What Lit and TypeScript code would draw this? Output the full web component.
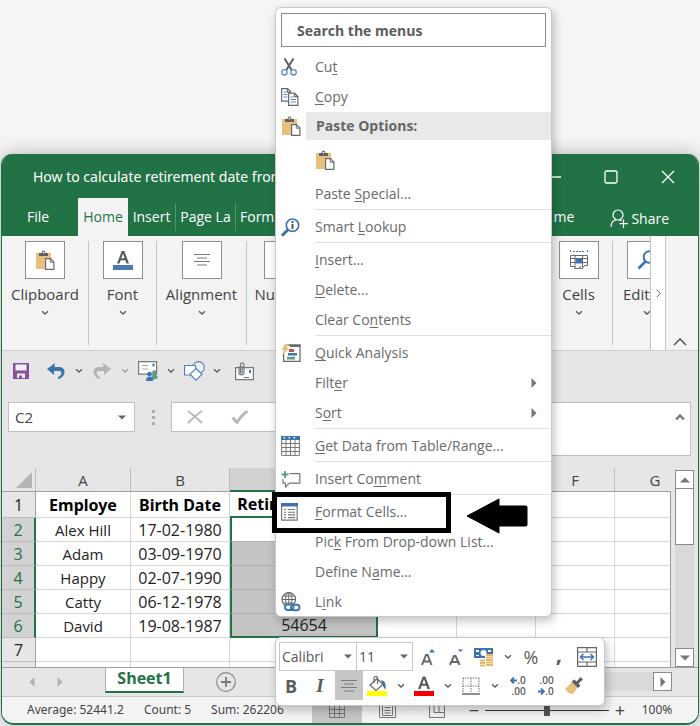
import { LitElement, html, svg, css, nothing, type TemplateResult } from "lit";
import { customElement } from "lit/decorators.js";
import { classMap } from "lit/directives/class-map.js";

const pic = (w: number, h: number, body: unknown) =>
  html`<svg width=${w} height=${h} viewBox="0 0 ${w} ${h}" fill="none" aria-hidden="true">${body}</svg>`;

const icons = {
  paste: () => pic(20, 20, svg`
    <path d="M1 3h15v5h-6v11H1z" fill="#e8c07d"/>
    <path d="M4 3h2.500c.2-1.600 1-2.500 2-2.500s1.800.9 2 2.500H13v3H4z" fill="#606060"/>
    <circle cx="8.500" cy="2.600" r=".9" fill="#fff"/>
    <path d="M10.600 8.600h4.900l3.400 3.400v7.400h-8.300z" fill="#fff" stroke="#6a6a6a" stroke-width="1.200"/>
    <path d="M15.300 8.600v3.600h3.500" stroke="#6a6a6a"/>`),
  fontA: () => pic(20, 20, svg`
    <path d="M4 13.500 8.800 1h2.500l4.700 12.500h-2.500l-1.200-3.300H7.600l-1.100 3.300zM8.300 8.300h3.300L10 3.500z" fill="#595959"/>
    <path d="M0 15h20v5H0z" fill="#4a7ab5"/>`),
  center: () => pic(18, 14, svg`<path d="M1 1.500h16M4 5h10M1 8.500h16M4 12h10" stroke="#7a7a7a" stroke-width="1.200"/>`),
  number: () => pic(20, 20, svg`<path d="M4 16 16 4" stroke="#666" stroke-width="1.500"/><circle cx="6" cy="6" r="2.500" stroke="#666"/><circle cx="14" cy="14" r="2.500" stroke="#666"/>`),
  cells: () => pic(20, 20, svg`
    <path d="M1.500 0v3M18.500 0v3M4 1.500h12" stroke="#3d74b0" stroke-dasharray="2 1"/>
    <path d="M1.500 5.500h17v10h-3l-2 3h-3l1-2-2 2h-4l1-2H1.500zM1.500 8.500h17M1.500 12.500h17M6 5.500v10M13.500 5.500v12" stroke="#6a6a6a"/>
    <path d="M6.500 8.500h7v5h-7z" fill="#3d74b0"/>`),
  find: () => pic(20, 20, svg`<circle cx="12.500" cy="7" r="5.800" stroke="#3d74b0" stroke-width="2"/><path d="M8.500 11.500 1.500 18.500" stroke="#3d74b0" stroke-width="2.600"/>`),
  chev: () => pic(8, 6, svg`<path d="M1 1.200 4 4l3-2.800" stroke="#5a5a5a" stroke-width="1.300"/>`),
  tri: () => pic(8, 5, svg`<path d="M0 .5h8L4 4.500z" fill="#666"/>`),
  save: () => pic(16, 16, svg`<path d="M0 0h16v16H0z" fill="#8352a0"/><path d="M2.500 1.500h11v6h-11z" fill="#f4eef7"/><path d="M4 10.500h8V15H4z" fill="#f4eef7"/><path d="M6 12.500h3V16H6z" fill="#8352a0"/>`),
  undo: () => pic(18, 16, svg`<path d="M8 0 0 6l7 6V8h5c3.500 0 3 4.500-1 6v2c8-1.500 9-12 1-12H7.500z" fill="#3d74b0"/>`),
  redo: () => pic(18, 16, svg`<path d="M10 0l8 6-7 6V8H6c-3.500 0-3 4.500 1 6v2C-1 14.500-2 4 6 4h4.500z" fill="#b4b4b4"/>`),
  mail: () => pic(20, 20, svg`
    <path d="M.6.600h18v12.500H.600z" fill="#fff" stroke="#777" stroke-width="1.200"/><path d="M4 4.500h6M4 8h6" stroke="#aaa"/><path d="M14.500 2.500h2v3h-2z" fill="#3d74b0"/>
    <circle cx="16.500" cy="11.500" r="2.300" fill="#5d9c84"/><path d="M13.500 19v-3c0-3 6-3 6 0v1.500z" fill="#5d9c84"/>
    <circle cx="11.500" cy="13" r="2.300" fill="#3d74b0"/><path d="M8 20c-.5-6 7.500-6 7 0z" fill="#3d74b0"/>`),
  shapes: () => pic(21, 20, svg`
    <circle cx="14.500" cy="6.500" r="5.800" fill="#e9f0f7" stroke="#5585b8" stroke-width="1.200"/>
    <path d="M.6 4.500h11v9.500H.600z" fill="#fff" stroke="#5585b8" stroke-width="1.200"/>
    <path d="m12 7.500 6 5.800-6 5.800-6-5.800z" fill="#fff" stroke="#5585b8" stroke-width="1.200"/>`),
  attach: () => pic(19, 19, svg`
    <path d="M.6 5.600h17.800v12H.600z" fill="#fff" stroke="#777" stroke-width="1.200"/><path d="M14 8h2v3h-2zM9 15h5v1H9z" fill="#3d74b0"/>
    <path d="M4 4.500v6.500c0 2.500 5 2.500 5 0V3c0-3-3.500-3-3.500 0v7.500c0 1 1.700 1 1.700 0V4" stroke="#777" stroke-width="1.200"/>`),
  cancel: () => pic(16, 14, svg`<path d="M1 1c4 3 9 7 14 12M15 1C9 5 5 9 1 13" stroke="#b9b9b9" stroke-width="2"/>`),
  accept: () => pic(18, 14, svg`<path d="m1.500 7.500 4.500 5C9 8 12 4 16.500 1" stroke="#b9b9b9" stroke-width="3"/>`),
  cut: () => pic(16, 18, svg`
    <path d="m3.500.500 7.500 12M12.500.500 5 12.500" stroke="#5f5f5f" stroke-width="2"/>
    <circle cx="3.400" cy="14.300" r="2.700" fill="#fff" stroke="#5b8cc0" stroke-width="1.300"/><circle cx="12.600" cy="14.300" r="2.700" fill="#fff" stroke="#5b8cc0" stroke-width="1.300"/>`),
  copy: () => pic(18, 18, svg`
    <path d="M.6.600h6l3 3v9.500h-9zM6.500.600v3.500h3" fill="#fff" stroke="#6a6a6a" stroke-width="1.200"/><path d="M2.500 4h3M2.500 6.500h4M2.500 9h4" stroke="#5b8cc0"/>
    <path d="M7.600 5.100h6l3.300 3.400v8.900H7.600zM13.500 5.100v3.500h3.300" fill="#fff" stroke="#6a6a6a" stroke-width="1.200"/><path d="M9.500 9h3M9.500 11.500h5.500M9.500 14h5.500" stroke="#5b8cc0"/>`),
  lookup: () => pic(19, 19, svg`<circle cx="11.500" cy="7.200" r="6.200" stroke="#3d74b0" stroke-width="1.600"/><path d="M7.300 11.500 1 17.700" stroke="#3d74b0" stroke-width="3"/><path d="M10.500 6h2v5h-2zM10.500 3h2v2h-2z" fill="#555"/>`),
  quick: () => pic(20, 18, svg`
    <path d="M7 1h12v16.300H2.600V9" stroke="#6a6a6a" stroke-width="1.300"/><path d="M9 1h10.500v2H9z" fill="#6a6a6a"/>
    <path d="M4 0h4L5.500 4H8L1 12l2-6H.5z" fill="#e8c07d"/><path d="M8 5h5v3H8z" fill="#c8523c"/><path d="M7 9h9v2.500H7z" fill="#3d74b0"/><path d="M6 12.800h8v2.700H6z" fill="#5d9c84"/>`),
  table: () => pic(19, 20, svg`
    <path d="M.6 3.500h17.800v15.900H.600zM.6 7.500h18M.6 11.500h18M.6 15.500h18M5 3.500v16M9.500 3.500v16M14 3.500v16" stroke="#777"/>
    <path d="M0 0h19v4H0z" fill="#3d74b0"/><path d="M2 1.200h2.500L3.200 3zM7 1.200h2.500L8.200 3zM12 1.200h2.500L13.200 3z" fill="#fff"/>`),
  comment: () => pic(20, 17, svg`<path d="M8.500 2.600h10.300v9.500H8.500L4.500 16v-3.900H2V8" stroke="#777" stroke-width="1.200"/><path d="M4 0v7M.5 3.500h7" stroke="#5d9c84" stroke-width="1.800"/>`),
  format: () => pic(17, 18, svg`<path d="M.6.600h15.600v16.600H.600z" fill="#fff" stroke="#777" stroke-width="1.200"/><path d="M0 0h17v3.500H0z" fill="#3d74b0"/><path d="M3 6.500h2M3 9.200h2M3 11.900h2M3 14.600h2M7 6.500h7M7 9.200h7M7 11.900h7M7 14.600h7" stroke="#777" stroke-width="1.100"/>`),
  link: () => pic(20, 20, svg`
    <circle cx="7.800" cy="7.500" r="6.800" stroke="#666" stroke-width="1.200"/><ellipse cx="7.800" cy="7.500" rx="3.200" ry="6.800" stroke="#666"/><path d="M1 7.500h13.500M2 4h11.500M2 11h11.500M7.800.500v14" stroke="#666"/>
    <rect x="4" y="12.500" width="8.500" height="5.500" rx="2.700" fill="#fff" stroke="#3d74b0" stroke-width="1.900"/><rect x="10" y="12.800" width="8.500" height="5.500" rx="2.700" stroke="#3d74b0" stroke-width="1.900"/>`),
  person: () => pic(19, 20, svg`<circle cx="8" cy="6" r="5" stroke="#fff" stroke-width="1.200"/><path d="M1 18c0-4 2-6.500 5-7M9.500 11l2 1M13.500 10.500v8.500M9.500 14.700h8.500" stroke="#fff" stroke-width="1.200"/>`),
  min: () => pic(14, 14, svg`<path d="M0 7h14" stroke="#fff" stroke-width="1.300"/>`),
  max: () => pic(14, 14, svg`<rect x="1" y="1" width="12" height="12" rx="1.500" stroke="#fff" stroke-width="1.300"/>`),
  close: () => pic(14, 14, svg`<path d="m1 1 12 12M13 1 1 13" stroke="#fff" stroke-width="1.400"/>`),
  growA: () => pic(16, 18, svg`<path d="m2 17 4-10h1.600l4 10M3.600 13.500h6.500" stroke="#666" stroke-width="1.900"/><path d="M9 4.500h6L12 1z" fill="#3d74b0"/>`),
  shrinkA: () => pic(16, 18, svg`<path d="m2 17 4-9h1.600l4 9M3.600 14h6.500" stroke="#666" stroke-width="1.900"/><path d="M10 1.500h5L12.500 4z" fill="#3d74b0"/>`),
  money: () => pic(20, 20, svg`<path d="M0 1h19v10H0z" fill="#3d74b0"/><path d="M2 3h3v2H2zM14 3h3v2h-3zM2 8h3v1H2z" fill="#fff"/><circle cx="9.500" cy="6" r="3" fill="#fff"/>
    <path d="M11 7h8v12H6v-7h5z" fill="#fff"/><path d="M12 8h7M12 10.500h7M12 13h7M12 15.500h7M12 18h7M6 13.500h5M6 16h5M6 18.500h5" stroke="#e3b66d" stroke-width="1.800"/>`),
  merge: () => pic(20, 20, svg`<path d="M.6.600h18.800v18.800H.600zM.6 5h18.800M.6 15h18.800M10 .5V5M10 15v4.500" stroke="#666" stroke-width="1.200"/><path d="M3 10h14M6.500 7 3.500 10l3 3M13.500 7l3 3-3 3" stroke="#3d74b0" stroke-width="1.500"/>`),
  fill: () => pic(20, 20, svg`<path d="m10 2.500 6 6-7 6-6-5.500z" fill="#fff" stroke="#666" stroke-width="1.200"/><path d="M7 7V2c0-2 3.500-2 3.500 0v6" stroke="#666" stroke-width="1.200"/><path d="M14 4c5 1 5 5 4.500 9.500C16 12 16.500 9 14 4z" fill="#3d74b0"/><path d="M0 15h20v5H0z" fill="#ff0"/>`),
  redA: () => pic(20, 20, svg`<path d="M4 13 8.800.500h2.500L16 13h-2.500l-1.200-3.300H7.600L6.500 13zM8.300 7.800h3.300L10 3z" fill="#595959"/><path d="M0 15h20v5H0z" fill="#f00000"/>`),
  borders: () => pic(18, 18, svg`<path d="M.5 1h17M.5 9h17M1 1v15M9 1v15M17 1v15" stroke="#777" stroke-dasharray="1.500 1"/><path d="M0 17h18" stroke="#666" stroke-width="1.500"/>`),
  arrowL: () => pic(7, 7, svg`<path d="M7 3.500H1M4 .5 1 3.500l3 3" stroke="#3d74b0" stroke-width="1.800"/>`),
  arrowR: () => pic(7, 7, svg`<path d="M0 3.500h6M3 .5l3 3-3 3" stroke="#3d74b0" stroke-width="1.800"/>`),
  brush: () => pic(18, 17, svg`<path d="m7 5 5.500 5.500L8 17c-3 0-6-2-8-5z" fill="#e8c07d"/><path d="m6.500 4.500 3-2 2 2L15.500 0 18 2.500l-4.500 4 2 2-2.500 2.500z" fill="#5f5f5f"/>`),
  viewNormal: () => pic(16, 13, svg`<path d="M.5.500h15v12H.500zM.5 4.500h15M.5 8.500h15M5.500.500v12M10.500.500v12" stroke="#777"/>`),
  viewPage: () => pic(17, 13, svg`<path d="M.5.500h16v12H.500zM3.500.500v10h10V.500M5.500 2.500h6M5.500 5.500h6M5.500 8h6" stroke="#777"/>`),
  viewBreak: () => pic(16, 13, svg`<path d="M.5.500h15v12H.500zM5 .5v7h11M10 .5v7" stroke="#777"/>`),
  up: () => pic(10, 6, svg`<path d="M0 5.500h10L5 .5z" fill="#777"/>`),
  down: () => pic(10, 6, svg`<path d="M0 .5h10L5 5.500z" fill="#777"/>`),
  right: () => pic(6, 10, svg`<path d="M.5 0v10l5-5z" fill="#777"/>`),
  left: () => pic(6, 10, svg`<path d="M5.500 0v10l-5-5z" fill="#777"/>`),
  caretUp: () => pic(14, 8, svg`<path d="m1 7 6-6 6 6" stroke="#444" stroke-width="1.400"/>`),
  caretUpBold: () => pic(10, 6, svg`<path d="m1 5.500 4-4 4 4" stroke="#777" stroke-width="2.400"/>`),
  caretRight: () => pic(5, 9, svg`<path d="m.7.700 3.600 3.800L.700 8.300" stroke="#666"/>`),
  plusCircle: () => pic(20, 20, svg`<circle cx="10" cy="10" r="9.300" stroke="#888" stroke-width="1.200"/><path d="M10 5v10M5 10h10" stroke="#777" stroke-width="1.800"/>`),
  corner: () => pic(16, 16, svg`<path d="M16 0v16H0z" fill="#b4b4b4"/>`),
  pointer: () => pic(62, 36, svg`<path d="M1 18 33 1v7h27q1 0 1 1v18q0 1-1 1H33v7z" fill="#000" stroke="#000" stroke-linejoin="round"/>`),
};

type MenuRow = { label: TemplateResult; icon?: () => TemplateResult; sub?: boolean; line?: boolean };

const clipboardRows: MenuRow[] = [
  { label: html`Cu<u>t</u>`, icon: icons.cut },
  { label: html`<u>C</u>opy`, icon: icons.copy },
];

const commandRows: MenuRow[] = [
  { label: html`Paste <u>S</u>pecial...`, line: true },
  { label: html`Smart <u>L</u>ookup`, icon: icons.lookup, line: true },
  { label: html`<u>I</u>nsert...` },
  { label: html`<u>D</u>elete...` },
  { label: html`Clear Co<u>n</u>tents`, line: true },
  { label: html`<u>Q</u>uick Analysis`, icon: icons.quick },
  { label: html`Filt<u>e</u>r`, sub: true },
  { label: html`S<u>o</u>rt`, sub: true, line: true },
  { label: html`<u>G</u>et Data from Table/Range...`, icon: icons.table, line: true },
  { label: html`Insert Co<u>m</u>ment`, icon: icons.comment, line: true },
  { label: html`<u>F</u>ormat Cells...`, icon: icons.format },
  { label: html`Pic<u>k</u> From Drop-down List...` },
  { label: html`Define N<u>a</u>me...` },
  { label: html`L<u>i</u>nk`, icon: icons.link },
];

@customElement("context-menu")
export class ContextMenu extends LitElement {
  static styles = css`
    :host { display: block; box-sizing: border-box; width: 277px; padding: 5px 0 0; background: #fff; border: 1px solid #c8c8c8; border-radius: 6px; box-shadow: 2px 4px 10px rgba(0, 0, 0, .24); font: 14px/20px "Open Sans", sans-serif; color: #6a6a6a; }
    input { display: block; box-sizing: border-box; width: 265px; height: 34px; margin: 0 5px 5px; padding: 0 15px; border: 1px solid #8a8a8a; font: bold 14px/20px "Open Sans", sans-serif; color: #5c5c5c; background: #fff; }
    input::placeholder { color: #5c5c5c; opacity: 1; }
    button { border: 0; background: none; font: inherit; color: inherit; text-align: left; padding: 0; }
    .row { display: grid; grid-template-columns: 30px 1fr 20px; column-gap: 9px; align-items: center; width: 100%; height: 30px; }
    .icon { display: flex; padding-left: 5px; align-items: center; height: 24px; }
    .line { height: 1px; margin: 0 0 2px 39px; background: #dfdfdf; }
    .head { display: grid; grid-template-columns: 30px 1fr; height: 28px; align-items: center; }
    .head strong { height: 28px; padding-left: 10px; line-height: 28px; background: #e9e9e9; color: #666; }
    .pastes { display: flex; align-items: center; height: 39px; padding-left: 39px; }
    svg { display: block; flex: none; }
    u { text-underline-offset: 2px; text-decoration-thickness: 1px; }
  `;

  private row(r: MenuRow) {
    return html`
      <button class="row" role="menuitem">
        <span class="icon">${r.icon ? r.icon() : nothing}</span>
        <span>${r.label}</span>
        ${r.sub ? icons.right() : nothing}
      </button>
      ${r.line ? html`<div class="line" role="separator"></div>` : nothing}
    `;
  }

  render() {
    return html`
      <input type="text" placeholder="Search the menus" aria-label="Search the menus" />
      ${clipboardRows.map((r) => this.row(r))}
      <div class="head"><span class="icon">${icons.paste()}</span><strong>Paste Options:</strong></div>
      <div class="pastes"><button aria-label="Paste">${icons.paste()}</button></div>
      ${commandRows.map((r) => this.row(r))}
    `;
  }
}

@customElement("mini-toolbar")
export class MiniToolbar extends LitElement {
  static styles = css`
    :host { display: block; box-sizing: border-box; width: 330px; height: 69px; padding: 4px 0 0 3px; background: #fff; border: 1px solid #c8c8c8; border-radius: 6px; box-shadow: 2px 4px 10px rgba(0, 0, 0, .24); font: 14px/20px "Open Sans", sans-serif; color: #555; }
    .line { display: flex; height: 29px; }
    .lower { margin-left: -2px; }
    .drop { display: grid; box-sizing: border-box; align-items: center; border: 1px solid #c8c8c8; }
    .drop > * { grid-area: 1 / 1; }
    .drop svg { justify-self: end; margin-right: 4px; pointer-events: none; }
    .family { width: 78px; }
    .size { width: 57px; margin-left: -1px; margin-right: 1px; }
    select { appearance: none; width: 100%; height: 27px; padding: 0 2px; border: 0; background: none; font: inherit; color: inherit; }
    button { display: flex; flex: none; align-items: center; justify-content: center; width: 28px; height: 29px; padding: 0; border: 0; background: none; font: 18px/20px "Open Sans", sans-serif; color: #5c5c5c; }
    .chev { width: 19px; }
    .on { background: #c6c6c6; }
    .bold { font-weight: bold; }
    .italic { width: 30px; font: italic bold 19px/20px "Liberation Serif", serif; }
    .comma { font-weight: bold; font-size: 22px; padding-bottom: 8px; }
    .digits { display: grid; font: 600 10px/11px "Open Sans", sans-serif; text-align: right; }
    .digits span { display: flex; align-items: center; justify-content: flex-end; }
    svg { display: block; }
  `;

  render() {
    const chev = (label: string) => html`<button class="chev" aria-label=${label}>${icons.chev()}</button>`;
    return html`
      <div class="line">
        <label class="drop family"><select aria-label="Font"><option>Calibri</option></select>${icons.tri()}</label>
        <label class="drop size"><select aria-label="Font size"><option>11</option></select>${icons.tri()}</label>
        <button aria-label="Increase font size">${icons.growA()}</button>
        <button aria-label="Decrease font size">${icons.shrinkA()}</button>
        <button aria-label="Accounting format">${icons.money()}</button>
        ${chev("More currencies")}
        <button>%</button>
        <button class="comma">,</button>
        <button aria-label="Merge and center">${icons.merge()}</button>
      </div>
      <div class="line lower">
        <button class="bold">B</button>
        <button class="italic">I</button>
        <button class="on" aria-label="Center">${icons.center()}</button>
        <button aria-label="Fill color">${icons.fill()}</button>
        ${chev("More fill colors")}
        <button aria-label="Font color">${icons.redA()}</button>
        ${chev("More font colors")}
        <button aria-label="Borders">${icons.borders()}</button>
        ${chev("More borders")}
        <button aria-label="Increase decimal"><span class="digits"><span>${icons.arrowL()}.0</span><span>.00</span></span></button>
        <button aria-label="Decrease decimal"><span class="digits"><span>.00</span><span>${icons.arrowR()}.0</span></span></button>
        <button aria-label="Format painter">${icons.brush()}</button>
      </div>
    `;
  }
}

const columns = ["A", "B", "C", "D", "E", "F", "G"];
const people = [
  ["Alex Hill", "17-02-1980", "51913"],
  ["Adam", "03-09-1970", "48460"],
  ["Happy", "02-07-1990", "55701"],
  ["Catty", "06-12-1978", "51478"],
  ["David", "19-08-1987", "54654"],
];

@customElement("sheet-grid")
export class SheetGrid extends LitElement {
  static styles = css`
    :host { display: block; overflow: hidden; font: 16px/22px "Open Sans", sans-serif; color: #222; }
    table { width: 100%; border-collapse: separate; border-spacing: 0; table-layout: fixed; background: #fff; }
    th, td { box-sizing: border-box; height: 24px; padding: 0; font-weight: 400; text-align: center; white-space: nowrap; overflow: hidden; }
    td { border-right: 1px solid #d6d6d6; border-bottom: 1px solid #d6d6d6; }
    td.name { font-size: 15px; }
    thead th { height: 23px; background: #e6e6e6; border-right: 1px solid #bdbdbd; border-bottom: 1px solid #a0a0a0; font-size: 15px; color: #444; }
    thead th:last-child { padding-left: 24px; border-right: 0; }
    tbody th { background: #e6e6e6; border-right: 1px solid #a0a0a0; border-bottom: 1px solid #bdbdbd; }
    .rowhead { width: 34px; }
    .a { width: 95px; }
    .b { width: 99px; }
    .c { width: 148px; }
    .d { width: 79px; }
    .corner svg { display: block; margin-left: 14px; }
    .first td, .first th { height: 26px; }
    .first td { font: bold 16px/22px "Noto Sans", sans-serif; color: #000; }
    tbody th.hot { background: #d2d2d2; color: #217346; border-right: 2px solid #217346; }
    thead th.hot { background: #d2d2d2; border-bottom: 2px solid #217346; }
    .first td.top { border-bottom: 2px solid #217346; }
    td.sel { background: #c4c4c4; border-left: 2px solid #217346; border-right: 2px solid #217346; border-bottom-color: #b0b0b0; }
    td.active { background: #fff; }
    td.end { border-bottom: 2px solid #217346; }
    .stub td, .stub th { height: 5px; border-bottom: 0; }
    td:last-child { border-right-color: #999; }
  `;

  render() {
    const rest = columns.slice(3);
    return html`
      <table>
        <colgroup>
          <col class="rowhead" /><col class="a" /><col class="b" /><col class="c" /><col class="d" /><col class="d" /><col class="d" /><col />
        </colgroup>
        <thead>
          <tr><th class="corner">${icons.corner()}</th>${columns.map((c) => html`<th class=${classMap({ hot: c === "C" })}>${c}</th>`)}</tr>
        </thead>
        <tbody>
          <tr class="first"><th>1</th><td>Employe</td><td>Birth Date</td><td class="top">Retirement Date</td>${rest.map(() => html`<td></td>`)}</tr>
          ${people.map(([name, birth, due], i) => html`
            <tr>
              <th class="hot">${i + 2}</th><td class="name">${name}</td><td>${birth}</td>
              <td class=${classMap({ sel: true, active: i === 0, end: i === people.length - 1 })}>${due}</td>
              ${rest.map(() => html`<td></td>`)}
            </tr>`)}
          <tr><th>7</th>${columns.map(() => html`<td></td>`)}</tr>
          <tr class="stub"><th></th>${columns.map(() => html`<td></td>`)}</tr>
        </tbody>
      </table>
    `;
  }
}

@customElement("app-root")
export class AppRoot extends LitElement {
  static styles = css`
    :host { display: block; position: relative; box-sizing: border-box; min-height: 100vh; padding: 154px 1px 3px; background: #f5f5f5; overflow: hidden; font: 15px/20px "Open Sans", sans-serif; color: #444; }
    button { display: flex; align-items: center; justify-content: center; flex: none; padding: 0; border: 0; background: none; font: inherit; color: inherit; }
    svg { display: block; flex: none; }
    .window { border: solid #217346; border-width: 0 1px 2px; border-radius: 11px 11px 13px 13px; overflow: hidden; background: #e6e6e6; box-shadow: 0 0 18px rgba(0, 0, 0, .28); }
    .title { display: flex; align-items: center; height: 44px; padding: 2px 23px 0 31px; box-sizing: border-box; background: #217346; color: #fff; font: 14px/20px "Noto Sans", sans-serif; gap: 43px; }
    .title span { flex: 1; }
    .tabs { display: flex; height: 38px; background: #217346; color: #fff; font-size: 14px; }
    .tab { height: 38px; }
    .tab.file { width: 76px; padding-right: 4px; }
    .tab.home { width: 50px; background: #f3f3f3; color: #217346; }
    .tab.insert { width: 48px; }
    .tab.page { width: 60px; }
    .tab.form { width: 80px; justify-content: flex-start; padding-left: 4px; }
    .tab.rule { height: 28px; margin-top: 5px; border-right: 1px solid #4f9670; box-sizing: border-box; }
    .gap { flex: 1; }
    .share { gap: 2px; height: 38px; padding: 4px 29px 0 36px; }
    .ribbon { display: flex; height: 115px; box-sizing: border-box; background: #f3f3f3; border-bottom: 1px solid #cfcfcf; }
    .group { display: flex; flex: none; flex-direction: column; align-items: center; width: 90px; height: 104px; margin-top: 5px; border-right: 1px solid #c4c4c4; box-sizing: border-box; }
    .group.clip { width: 87px; }
    .group.narrow { width: 68px; }
    .group.number { width: 74px; }
    .group.edit { width: 37px; align-items: flex-start; padding-left: 10px; overflow: hidden; border: 0; }
    .tile { width: 40px; height: 38px; border: 1px solid #8f8f8f; background: #fff; box-sizing: border-box; flex: none; }
    .group span { margin: 5px 0 6px; white-space: nowrap; }
    .edit .tile { margin-left: 4px; }
    .edit > svg { margin-left: 20px; }
    .more { width: 16px; height: 114px; border: solid #c4c4c4; border-width: 0 1px; background: #fff; box-sizing: border-box; }
    .fold { width: 32px; height: 114px; align-items: flex-end; padding: 0 4px 4px 0; box-sizing: border-box; }
    .quick { display: flex; align-items: center; height: 40px; padding-left: 11px; }
    .save { margin-right: 12px; }
    .wide { width: 30px; }
    .wide.last { margin-left: 4px; }
    .quick .chev { width: 16px; }
    .dim { opacity: .5; }
    .formula { display: flex; align-items: flex-start; height: 66px; padding: 11px 7px 0 6px; }
    .namebox { display: flex; width: 127px; height: 30px; box-sizing: border-box; border: 1px solid #c0c0c0; background: #fff; }
    input.cell { width: 100px; min-width: 0; border: 0; padding: 0 0 0 6px; background: none; font: inherit; color: #444; }
    .namebox button { width: 24px; }
    .dots { display: grid; gap: 3px; width: 36px; justify-content: center; padding-top: 8px; }
    .dots i { width: 3px; height: 3px; background: #adadad; }
    .checks { display: flex; width: 120px; height: 30px; box-sizing: border-box; border: solid #c0c0c0; border-width: 1px 0 1px 1px; background: #fff; }
    .checks button { width: 45px; }
    .entry { display: flex; flex: 1; height: 54px; box-sizing: border-box; align-items: flex-start; border: solid #c0c0c0; border-width: 1px 1px 1px 0; background: #fff; }
    .entry input { flex: 1; min-width: 0; border: 0; height: 28px; padding: 0 6px; background: none; font: inherit; }
    .entry button { width: 20px; height: 27px; }
    .body { display: flex; }
    sheet-grid { flex: 1; min-width: 0; }
    .scroll { display: flex; flex-direction: column; width: 19px; margin: 2px 4px 0; background: #d9d9d9; }
    .knob { width: 19px; height: 19px; box-sizing: border-box; border: 1px solid #8a8a8a; background: #fff; }
    .thumb { height: 56px; box-sizing: border-box; border: 1px solid #8a8a8a; border-top: 0; background: #fff; }
    .sheets { display: flex; height: 30px; box-sizing: border-box; border-top: 1px solid #a0a0a0; border-bottom: 1px solid #c8c8c8; align-items: flex-start; }
    .step { width: 28px; height: 28px; opacity: .45; }
    .step.first { margin-left: 16px; }
    .sheet { width: 79px; height: 25px; margin: 0 15px 0 31px; box-sizing: border-box; background: #fff; border: solid #b0b0b0; border-width: 0 1px; border-bottom: 2px solid #217346; color: #217346; font-weight: bold; font-size: 16px; padding-bottom: 4px; }
    .add { width: 54px; height: 28px; }
    .hscroll { display: flex; justify-content: flex-end; width: 160px; height: 19px; margin: 4px 26px 0 0; background: #d9d9d9; }
    .status { display: flex; align-items: center; height: 26px; background: #f3f3f3; font: 12px/20px "Noto Sans", sans-serif; }
    .status .facts { display: flex; gap: 20px; width: 310px; padding-left: 25px; box-sizing: border-box; white-space: nowrap; }
    .view { width: 50px; height: 26px; padding-top: 2px; }
    .view.on { background: #c6c6c6; }
    .zoom { display: flex; align-items: center; margin-left: auto; font-size: 18px; }
    .zoom button { width: 22px; }
    .zoom output { width: 52px; padding-right: 15px; text-align: center; font-size: 12px; }
    input[type="range"] { appearance: none; width: 124px; height: 14px; margin: 0; background: linear-gradient(#333, #333) center / 100% 1px no-repeat; }
    input[type="range"]::-webkit-slider-thumb { appearance: none; width: 6px; height: 12px; background: #555; }
    context-menu { position: absolute; left: 275px; top: 7px; height: 610px; }
    mini-toolbar { position: absolute; left: 275px; top: 637px; }
    .frame { position: absolute; left: 272px; top: 492px; width: 179px; height: 41px; box-sizing: border-box; border: 5px solid #000; pointer-events: none; }
    .arrow { position: absolute; left: 466px; top: 498px; pointer-events: none; }
  `;

  private group(name: string, kind: string, icon: TemplateResult) {
    return html`<div class="group ${kind}"><button class="tile" aria-label=${name}>${icon}</button><span>${name}</span>${icons.chev()}</div>`;
  }

  render() {
    const chev = (label: string, dim = false) =>
      html`<button class=${classMap({ chev: true, dim })} aria-label=${label}>${icons.chev()}</button>`;
    return html`
      <main class="window">
        <header class="title">
          <span>How to calculate retirement date from</span>
          <button aria-label="Minimize">${icons.min()}</button>
          <button aria-label="Maximize">${icons.max()}</button>
          <button aria-label="Close">${icons.close()}</button>
        </header>
        <nav class="tabs">
          <button class="tab file">File</button>
          <button class="tab home">Home</button>
          <button class="tab insert rule">Insert</button>
          <button class="tab page rule">Page La</button>
          <button class="tab form">Form</button>
          <div class="gap"></div>
          <button class="tab">me</button>
          <button class="share">${icons.person()}Share</button>
        </nav>
        <section class="ribbon">
          ${this.group("Clipboard", "clip", icons.paste())}
          ${this.group("Font", "narrow", icons.fontA())}
          ${this.group("Alignment", "", icons.center())}
          ${this.group("Number", "number", icons.number())}
          <div class="gap"></div>
          ${this.group("Cells", "narrow", icons.cells())}
          ${this.group("Editing", "edit", icons.find())}
          <button class="more" aria-label="More commands">${icons.caretRight()}</button>
          <button class="fold" aria-label="Collapse ribbon">${icons.caretUp()}</button>
        </section>
        <section class="quick">
          <button class="save" aria-label="Save">${icons.save()}</button>
          <button class="wide" aria-label="Undo">${icons.undo()}</button>${chev("Undo history")}
          <button class="wide" aria-label="Redo">${icons.redo()}</button>${chev("Redo history", true)}
          <button class="wide" aria-label="Send">${icons.mail()}</button>${chev("Send options")}
          <button class="wide" aria-label="Shapes">${icons.shapes()}</button>${chev("More shapes")}
          <button class="wide last" aria-label="Attach">${icons.attach()}</button>
        </section>
        <section class="formula">
          <div class="namebox"><input class="cell" aria-label="Name box" .value=${"C2"} /><button aria-label="Names">${icons.tri()}</button></div>
          <div class="dots"><i></i><i></i><i></i></div>
          <div class="checks"><button aria-label="Cancel">${icons.cancel()}</button><button aria-label="Enter">${icons.accept()}</button></div>
          <div class="entry"><input aria-label="Formula" /><button aria-label="Collapse formula bar">${icons.caretUpBold()}</button></div>
        </section>
        <section class="body">
          <sheet-grid></sheet-grid>
          <div class="scroll">
            <button class="knob" aria-label="Scroll up">${icons.up()}</button>
            <div class="thumb"></div>
            <div class="gap"></div>
            <button class="knob" aria-label="Scroll down">${icons.down()}</button>
          </div>
        </section>
        <section class="sheets">
          <button class="step first" aria-label="Previous sheet">${icons.left()}</button>
          <button class="step" aria-label="Next sheet">${icons.right()}</button>
          <button class="sheet">Sheet1</button>
          <button class="add" aria-label="New sheet">${icons.plusCircle()}</button>
          <div class="gap"></div>
          <div class="hscroll"><button class="knob" aria-label="Scroll right">${icons.right()}</button></div>
        </section>
        <footer class="status">
          <div class="facts"><span>Average: 52441.2</span><span>Count: 5</span><span>Sum: 262206</span></div>
          <button class="view on" aria-label="Normal view">${icons.viewNormal()}</button>
          <button class="view" aria-label="Page layout view">${icons.viewPage()}</button>
          <button class="view" aria-label="Page break view">${icons.viewBreak()}</button>
          <div class="zoom">
            <button aria-label="Zoom out">−</button>
            <input type="range" min="0" max="100" .value=${"50"} aria-label="Zoom" />
            <button aria-label="Zoom in">+</button>
            <output>100%</output>
          </div>
        </footer>
      </main>
      <context-menu role="menu"></context-menu>
      <mini-toolbar role="toolbar"></mini-toolbar>
      <div class="frame"></div>
      <div class="arrow">${icons.pointer()}</div>
    `;
  }
}
